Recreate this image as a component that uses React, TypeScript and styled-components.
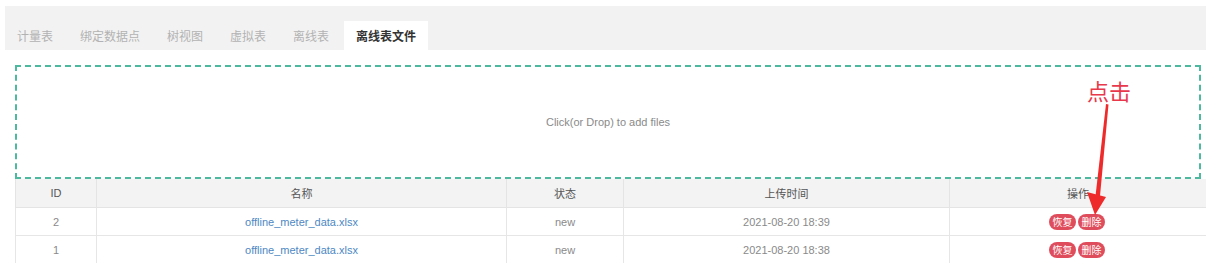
import React from 'react';
import styled, {createGlobalStyle} from 'styled-components';

const GlobalStyle = createGlobalStyle`
  html, body {
    margin: 0;
    padding: 0;
    background: #fff;
  }
  body {
    font-family: "Liberation Sans", Arial, "Noto Sans CJK SC", sans-serif;
  }
`;

const Page = styled.div`
  position: relative;
  padding: 6px 5px 0 5px;
  width: 1206px;
  height: 263px;
  box-sizing: border-box;
  overflow: hidden;
`;

const TabBar = styled.div`
  display: flex;
  align-items: flex-end;
  gap: 3px;
  height: 44px;
  margin-right: -5px;
  background: #f2f2f2;
  box-sizing: border-box;
`;

const Tab = styled.div<{ $active?: boolean }>`
  height: 29px;
  padding: 0 12px;
  display: flex;
  align-items: center;
  font-size: 12px;
  color: ${p => (p.$active ? '#333' : '#b2b2b2')};
  font-weight: ${p => (p.$active ? 600 : 400)};
  background: ${p => (p.$active ? '#fff' : 'transparent')};
  cursor: pointer;
`;

const Content = styled.div`
  padding: 15px 0 0 10px;
`;

const DropZone = styled.div`
  height: 114px;
  box-sizing: border-box;
  border: 2px dashed #4dbaa0;
  display: flex;
  align-items: center;
  justify-content: center;
  font-size: 11px;
  color: #8a8a8a;
`;

const Table = styled.table`
  width: 100%;
  border-collapse: collapse;
  table-layout: fixed;
  font-size: 11px;
`;

const Th = styled.th<{ $w: number }>`
  width: ${p => p.$w}px;
  height: 28px;
  padding: 0;
  background: #f3f3f3;
  color: #555;
  font-weight: 400;
  border: 1px solid #e4e4e4;
  border-top: none;
  text-align: center;
`;

const Td = styled.td`
  height: 27px;
  padding: 0;
  color: #8a8a8a;
  border: 1px solid #e6e6e6;
  text-align: center;
`;

const FileLink = styled.a`
  color: #4d88c4;
  text-decoration: none;
`;

const Actions = styled.div`
  display: flex;
  justify-content: center;
  gap: 2px;
  padding-right: 2px;
`;

const PillButton = styled.span`
  display: inline-flex;
  align-items: center;
  height: 16px;
  padding: 0 3.5px;
  border-radius: 8px;
  background: #df4d5c;
  color: #fff;
  font-size: 10px;
  font-family: "Noto Sans CJK SC", sans-serif;
`;

const Note = styled.div`
  position: absolute;
  left: 1087px;
  top: 79px;
  font-size: 22px;
  color: #e8394c;
  font-family: "Noto Sans CJK SC", sans-serif;
  line-height: 1;
`;

const Arrow = styled.svg`
  position: absolute;
  left: 1080px;
  top: 102px;
  pointer-events: none;
`;

const TABS = ['计量表', '绑定数据点', '树视图', '虚拟表', '离线表', '离线表文件'];

const COLS = [
  {title: 'ID', w: 80},
  {title: '名称', w: 409},
  {title: '状态', w: 116},
  {title: '上传时间', w: 325},
  {title: '操作', w: 256}
];

const ROWS = [
  {id: 2, name: 'offline_meter_data.xlsx', status: 'new', time: '2021-08-20 18:39'},
  {id: 1, name: 'offline_meter_data.xlsx', status: 'new', time: '2021-08-20 18:38'}
];

const App = () => {
  return (
    <Page>
      <GlobalStyle/>
      <TabBar>
        {TABS.map((t, i) => <Tab key={t} $active={i === TABS.length - 1}>{t}</Tab>)}
      </TabBar>
      <Content>
        <DropZone>Click(or Drop) to add files</DropZone>
        <Table>
          <thead>
          <tr>
            {COLS.map(c => <Th key={c.title} $w={c.w}>{c.title}</Th>)}
          </tr>
          </thead>
          <tbody>
          {ROWS.map(r => (
            <tr key={r.id}>
              <Td>{r.id}</Td>
              <Td><FileLink href="#">{r.name}</FileLink></Td>
              <Td>{r.status}</Td>
              <Td>{r.time}</Td>
              <Td>
                <Actions>
                  <PillButton>恢复</PillButton>
                  <PillButton>删除</PillButton>
                </Actions>
              </Td>
            </tr>
          ))}
          </tbody>
        </Table>
      </Content>
      <Note>点击</Note>
      <Arrow width="40" height="120" viewBox="0 0 40 120">
        <polygon points="26,2 28.5,2.5 20,94 15.5,94" fill="#ee2a2a"/>
        <polygon points="7,90 26,95 15,113" fill="#ee2a2a"/>
      </Arrow>
    </Page>
  );
};

export default App;
